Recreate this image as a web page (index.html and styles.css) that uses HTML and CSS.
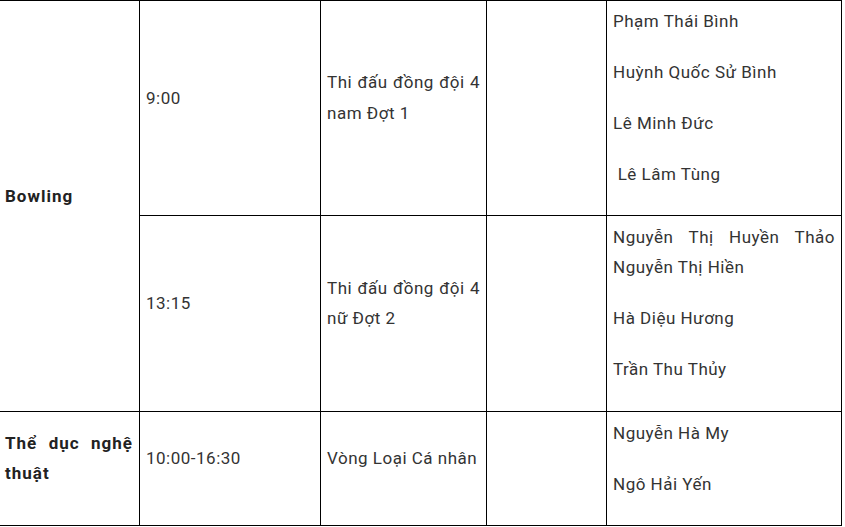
FILE: index.html
```html
<!DOCTYPE html>
<html lang="vi">
<head>
<meta charset="utf-8">
<title>Lịch thi đấu</title>
<link rel="stylesheet" href="styles.css">
</head>
<body>
<table class="schedule">
  <colgroup>
    <col class="c-sport">
    <col class="c-time">
    <col class="c-event">
    <col class="c-empty">
    <col class="c-names">
  </colgroup>
  <tbody>
    <tr class="r1">
      <td rowspan="2" class="sport"><p>Bowling</p></td>
      <td><p>9:00</p></td>
      <td><p>Thi đấu đồng đội 4 nam Đợt 1</p></td>
      <td></td>
      <td class="names">
        <p>Phạm Thái Bình</p>
        <p>Huỳnh Quốc Sử Bình</p>
        <p>Lê Minh Đức</p>
        <p>&nbsp;Lê Lâm Tùng</p>
      </td>
    </tr>
    <tr class="r2">
      <td><p>13:15</p></td>
      <td><p>Thi đấu đồng đội 4 nữ Đợt 2</p></td>
      <td></td>
      <td class="names">
        <p>Nguyễn Thị Huyền Thảo Nguyễn Thị Hiền</p>
        <p>Hà Diệu Hương</p>
        <p>Trần Thu Thủy</p>
      </td>
    </tr>
    <tr class="r3">
      <td class="sport"><p>Thể dục nghệ thuật</p></td>
      <td><p>10:00-16:30</p></td>
      <td><p>Vòng Loại Cá nhân</p></td>
      <td></td>
      <td class="names">
        <p>Nguyễn Hà My</p>
        <p>Ngô Hải Yến</p>
      </td>
    </tr>
  </tbody>
</table>
</body>
</html>
```

FILE: styles.css
```css
html, body {
  margin: 0;
  padding: 0;
  background: #fff;
}

body {
  font-family: Roboto, "Liberation Sans", sans-serif;
  font-size: 17px;
  line-height: 1.8;
  letter-spacing: 0.5px;
  color: #333;
  overflow: hidden;
}

.schedule {
  border-collapse: collapse;
  table-layout: fixed;
  width: 843px;
  margin: 0 0 0 -2px;
}

.c-sport { width: 141px; }
.c-time { width: 181px; }
.c-event { width: 166px; }
.c-empty { width: 120px; }
.c-names { width: 235px; }

.schedule td {
  border: 1px solid #000;
  padding: 5px 6px;
  vertical-align: middle;
  text-align: justify;
}

.schedule p {
  margin: 0 0 20.4px;
}

.r1 td { height: 204px; }
.r2 td { height: 185px; }
.r3 td { height: 103px; }

.sport {
  font-weight: 700;
  color: #222;
  letter-spacing: 1px;
}
```
